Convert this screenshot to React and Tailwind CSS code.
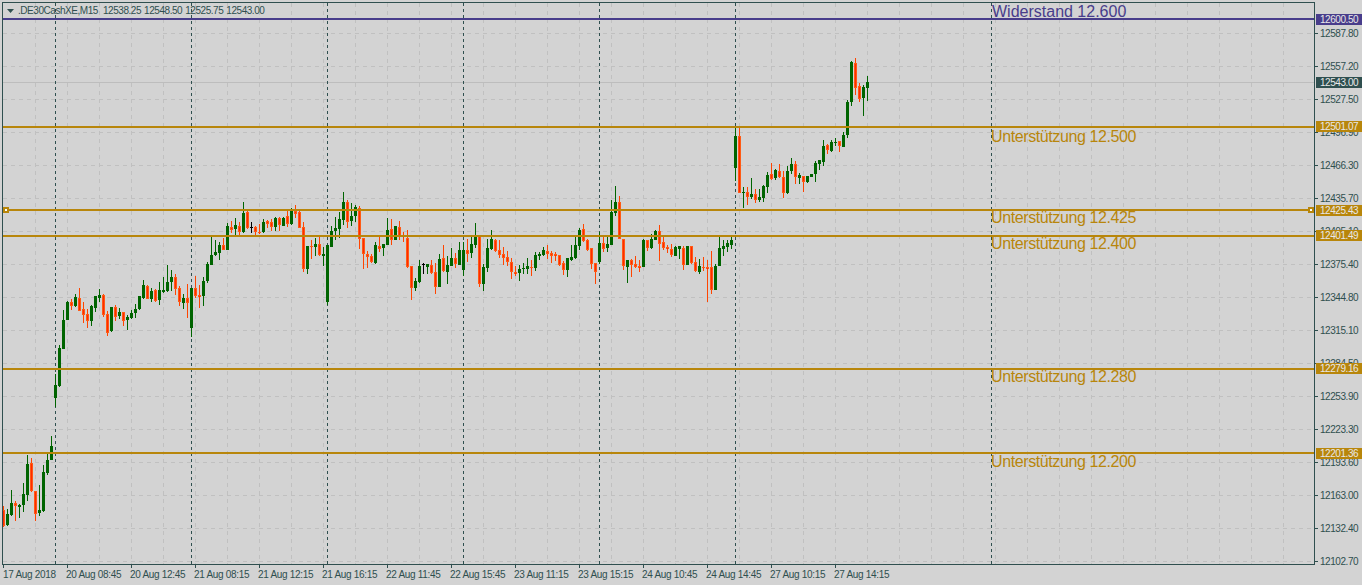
import React from "react";

// every candle: type, body top, body bottom, wick top, wick bottom (page pixels). x = 3 + 4 * index
const candles = [
  ["o",510,526,506,527],["g",514,525,509,526],["g",503,515,490,516],["o",503,506,501,521],["g",505,507,504,518],
  ["g",494,505,483,512],["g",464,495,455,501],["o",463,491,458,492],["o",491,514,491,521],["g",510,513,485,516],
  ["g",472,511,465,512],["g",460,473,453,475],["g",446,460,436,460],["g",385,398,374,407],["g",348,386,345,387],
  ["g",320,349,310,349],["g",302,320,301,320],["o",302,306,299,310],["g",297,306,294,307],["o",298,311,288,311],
  ["o",309,315,302,323],["o",314,321,309,328],["g",306,321,305,326],["g",296,308,296,312],["g",295,298,289,302],
  ["o",295,315,294,317],["o",314,333,311,336],["g",307,331,307,332],["o",307,317,305,321],["g",312,316,308,319],
  ["o",312,321,312,326],["g",317,320,315,330],["g",313,318,310,319],["g",309,313,304,318],["g",296,309,296,310],
  ["g",285,298,280,299],["o",286,299,285,299],["g",291,299,288,302],["o",290,301,289,302],["g",290,300,282,305],
  ["g",290,292,277,293],["g",282,291,265,292],["g",277,282,270,291],["o",277,289,274,295],["o",288,302,286,306],
  ["g",298,303,294,309],["o",298,303,284,318],["g",288,328,288,337],["o",288,296,276,298],["o",295,297,285,308],
  ["g",281,296,277,306],["g",264,281,262,283],["g",255,265,237,265],["g",252,255,240,256],["g",245,253,242,260],
  ["o",245,250,238,250],["g",226,250,223,250],["o",227,230,221,233],["g",225,229,218,235],["o",226,232,222,235],
  ["g",213,232,202,233],["o",212,228,211,229],["k",227,228,222,233],["o",227,232,226,235],["o",232,233,224,234],
  ["g",222,232,219,233],["o",221,224,220,228],["o",222,227,219,231],["g",218,227,217,231],["o",218,225,217,231],
  ["g",218,226,217,226],["o",216,224,210,227],["g",210,224,208,225],["o",211,214,205,218],["o",212,228,210,228],
  ["o",227,269,222,272],["g",246,269,246,274],["o",246,247,240,259],["g",244,247,238,256],["o",244,255,237,256],
  ["g",254,256,247,266],["g",245,302,245,305],["g",231,247,226,247],["g",228,231,217,240],["g",219,229,212,238],
  ["g",202,220,192,225],["o",202,222,200,228],["g",216,221,203,226],["g",207,216,205,222],["o",208,239,206,249],
  ["o",238,254,238,269],["o",254,257,251,268],["o",256,262,254,263],["g",245,263,242,264],["o",246,249,237,252],
  ["g",244,248,244,256],["g",230,245,218,245],["o",229,240,219,245],["g",226,240,226,240],["o",227,236,221,240],
  ["o",236,237,232,242],["o",238,267,230,268],["o",266,288,266,300],["g",281,288,278,291],["g",266,282,260,283],
  ["k",264,265,263,274],["g",264,267,264,274],["o",265,273,260,274],["o",272,287,263,294],["g",259,287,254,287],
  ["o",258,271,245,272],["g",265,272,256,284],["g",258,266,248,266],["o",258,264,253,268],["g",250,265,242,265],
  ["g",250,270,242,276],["o",250,254,239,262],["g",244,253,237,258],["g",236,245,223,248],["o",236,284,236,287],
  ["g",267,284,264,291],["g",248,268,239,272],["g",239,249,230,250],["o",240,251,239,252],["o",250,255,240,258],
  ["o",254,258,247,265],["o",257,262,251,266],["o",262,272,258,279],["o",272,274,266,276],["g",269,273,265,281],
  ["g",268,269,263,274],["g",266,269,258,274],["o",267,268,260,276],["g",255,268,252,271],["g",254,256,252,260],
  ["g",250,255,247,256],["o",251,254,245,259],["o",253,256,251,263],["o",254,256,252,261],["o",255,265,255,266],
  ["o",263,270,261,275],["g",258,270,258,277],["g",257,260,245,261],["g",245,258,236,259],["g",230,246,228,250],
  ["o",229,241,224,242],["o",240,250,239,251],["o",248,264,248,269],["o",263,272,263,284],["g",243,262,232,264],
  ["o",243,249,237,252],["g",244,248,237,252],["g",212,245,200,245],["g",202,213,186,216],["o",202,239,196,239],
  ["o",239,266,239,270],["g",260,267,260,283],["o",260,265,259,277],["o",264,267,256,268],["o",266,268,260,272],
  ["g",240,267,239,267],["o",240,248,240,251],["g",239,248,234,249],["g",231,240,230,240],["o",231,244,225,261],
  ["o",242,248,236,250],["o",247,249,245,253],["o",249,255,244,257],["g",247,256,246,256],["g",246,249,246,259],
  ["o",248,265,246,270],["g",246,265,246,265],["o",246,263,246,264],["o",262,271,257,272],["g",266,272,259,274],
  ["o",267,268,257,271],["o",267,269,260,302],["o",267,290,251,294],["g",266,290,264,290],["g",248,266,237,266],
  ["g",246,249,240,256],["g",243,247,240,252],["g",240,245,237,249],["g",136,168,128,181],["o",136,193,128,193],
  ["g",192,193,187,208],["o",192,197,187,205],["g",194,197,178,199],["o",194,200,189,203],["g",197,200,189,202],
  ["g",186,198,185,202],["g",175,187,172,193],["o",174,179,163,180],["g",170,178,169,180],["o",171,177,164,178],
  ["o",177,193,171,198],["g",171,193,166,194],["g",164,171,158,174],["o",164,177,161,184],["g",175,178,173,184],
  ["o",176,182,176,192],["g",176,182,176,183],["g",174,177,174,177],["g",163,174,161,182],["g",160,164,160,170],
  ["g",146,162,140,166],["o",145,150,144,154],["g",142,151,140,152],["g",142,143,138,146],["o",141,146,141,152],
  ["g",135,147,132,147],["g",102,135,100,138],["g",62,102,61,106],["o",63,88,58,95],["o",86,99,83,102],
  ["g",87,98,85,116],["g",82,88,76,101],
];

const wickColor = { g: "#006400", o: "#ff4500", k: "#000000" };

const gridY = [33,66,99,132,165,198,231,264,297,330,363,396,429,462,495,528,561];
const gridX = Array.from({ length: 41 }, (_, i) => 35 + i * 32);
const sessions = [55,191,327,463,599,735,991];

const prices = ["12587.80","12557.20","12527.50","12496.90","12466.30","12435.70","12405.10","12375.40","12344.80","12315.10","12284.50","12253.90","12223.30","12193.60","12163.00","12132.40","12102.70"];
const times = ["17 Aug 2018","20 Aug 08:45","20 Aug 12:45","21 Aug 08:15","21 Aug 12:15","21 Aug 16:15","22 Aug 11:45","22 Aug 15:45","23 Aug 11:15","23 Aug 15:15","24 Aug 10:45","24 Aug 14:45","27 Aug 10:15","27 Aug 14:15"];

// horizontal levels drawn by hand on the chart
const levels = [
  { y: 18, tagY: 14, color: "#483d8b", tag: "12600.50", label: "Widerstand 12.600", labelY: 12 },
  { y: 126, tagY: 121, color: "#b8860b", tag: "12501.07", label: "Unterstützung 12.500", labelY: 137 },
  { y: 209, tagY: 205, color: "#b8860b", tag: "12425.43", label: "Unterstützung 12.425", labelY: 218 },
  { y: 235, tagY: 230, color: "#b8860b", tag: "12401.49", label: "Unterstützung 12.400", labelY: 244 },
  { y: 368, tagY: 363, color: "#b8860b", tag: "12279.16", label: "Unterstützung 12.280", labelY: 377 },
  { y: 452, tagY: 448, color: "#b8860b", tag: "12201.36", label: "Unterstützung 12.200", labelY: 462 },
];

const Candle = ({ candle, index }) => {
  const [type, top, bottom, wickTop, wickBottom] = candle;
  const x = 3 + index * 4;
  return (
    <g>
      <rect x={x} y={wickTop} width="1" height={wickBottom - wickTop} fill={wickColor[type]} />
      {type === "k" ? (
        <rect x={x - 1} y={top} width="3" height="1" fill="#000000" />
      ) : (
        <rect x={x - 1} y={top} width="3" height={bottom - top} fill={type === "g" ? "#006400" : "#ff5a14"} />
      )}
      {type === "o" && <rect x={x} y={top + 1} width="1" height={Math.max(bottom - top - 2, 1)} fill="#ff2a00" />}
    </g>
  );
};

const Chart = () => (
  <svg className="absolute inset-0" width="1311" height="561" viewBox="3 3 1311 561" shapeRendering="crispEdges">
    {gridY.map((y) => (
      <line key={y} x1="3" x2="1314" y1={y + 0.5} y2={y + 0.5} stroke="#c0c0c0" strokeDasharray="4 4" />
    ))}
    {gridX.map((x) => (
      <line key={x} x1={x + 0.5} x2={x + 0.5} y1="3" y2="564" stroke="#c0c0c0" strokeDasharray="4 4" />
    ))}
    <rect x="3" y="82" width="1311" height="1" fill="#bdbdbd" />
    {sessions.map((x) => (
      <line key={x} x1={x + 0.5} x2={x + 0.5} y1="3" y2="564" stroke="#2f4f4f" strokeDasharray="3 3" />
    ))}
    {candles.map((c, i) => (
      <Candle key={i} candle={c} index={i} />
    ))}
    {levels.map((l) => (
      <rect key={l.y} x="3" y={l.y} width="1311" height="2" fill={l.color} />
    ))}
    {/* selection handles of the 12425 line */}
    <rect x="3" y="207" width="6" height="6" fill="#b8860b" />
    <rect x="5" y="209" width="2" height="2" fill="#ffffff" />
    <rect x="1308" y="207" width="6" height="6" fill="#b8860b" />
    <rect x="1310" y="209" width="2" height="2" fill="#ffffff" />
  </svg>
);

const App = () => {
  return (
    <div className="relative w-[1362px] h-[585px] overflow-hidden bg-[#d3d3d3] text-[#2f4f4f] font-['Liberation_Sans',Arial,sans-serif] text-[10px] tracking-[-0.45px] leading-none">
      <div className="flex h-[565px]">
        <div className="relative ml-[2px] mt-[2px] w-[1313px] h-[563px] border border-[#2f4f4f]">
          <Chart />

          {/* symbol header */}
          <div className="absolute left-[4px] top-[4px] flex items-center h-[8px] whitespace-pre">
            <svg width="7" height="4" viewBox="0 0 7 4" className="mr-[4px]">
              <path d="M0 0H7L3.5 4Z" fill="#2f4f4f" />
            </svg>
            <span className="mr-[5px]">.DE30CashXE,M15</span>
            <span className="mr-[3px]">12538.25</span>
            <span className="mr-[3px]">12548.50</span>
            <span className="mr-[3px]">12525.75</span>
            <span>12543.00</span>
          </div>

          {levels.map((l, i) => (
            <span
              key={l.label}
              className={
                i === 0
                  ? "absolute left-[989px] text-[16px] tracking-normal whitespace-nowrap -translate-y-1/2"
                  : "absolute left-[988px] text-[16px] tracking-[-0.4px] whitespace-nowrap -translate-y-1/2"
              }
              style={{ top: l.labelY - 3, color: l.color }}
            >
              {l.label}
            </span>
          ))}
        </div>

        {/* price axis */}
        <div className="relative flex-1 pt-[17px]">
          {prices.map((p) => (
            <div key={p} className="flex items-center h-[33px]">
              <div className="w-[3px] h-px bg-[#2f4f4f]" />
              <span className="ml-[2px]">{p}</span>
            </div>
          ))}
          {levels.map((l) => (
            <div
              key={l.tag}
              className="absolute left-px right-0 h-[11px] pl-[4px] flex items-center text-[#e8e8e8]"
              style={{ top: l.tagY, backgroundColor: l.color }}
            >
              {l.tag}
            </div>
          ))}
          <div className="absolute left-px right-0 top-[77px] h-[11px] pl-[4px] flex items-center bg-[#2f4f4f] text-[#e8e8e8]">
            12543.00
          </div>
        </div>
      </div>

      {/* time axis */}
      <div className="flex ml-[2px] tracking-[-0.3px]">
        {times.map((t, i) => (
          <div key={t} className="w-[64px] shrink-0">
            <div className="w-px h-[3px] ml-px bg-[#2f4f4f]" />
            <div className={i === 0 ? "mt-[2px] ml-px whitespace-nowrap" : "mt-[2px] whitespace-nowrap"}>{t}</div>
          </div>
        ))}
      </div>
    </div>
  );
};

export default App;
